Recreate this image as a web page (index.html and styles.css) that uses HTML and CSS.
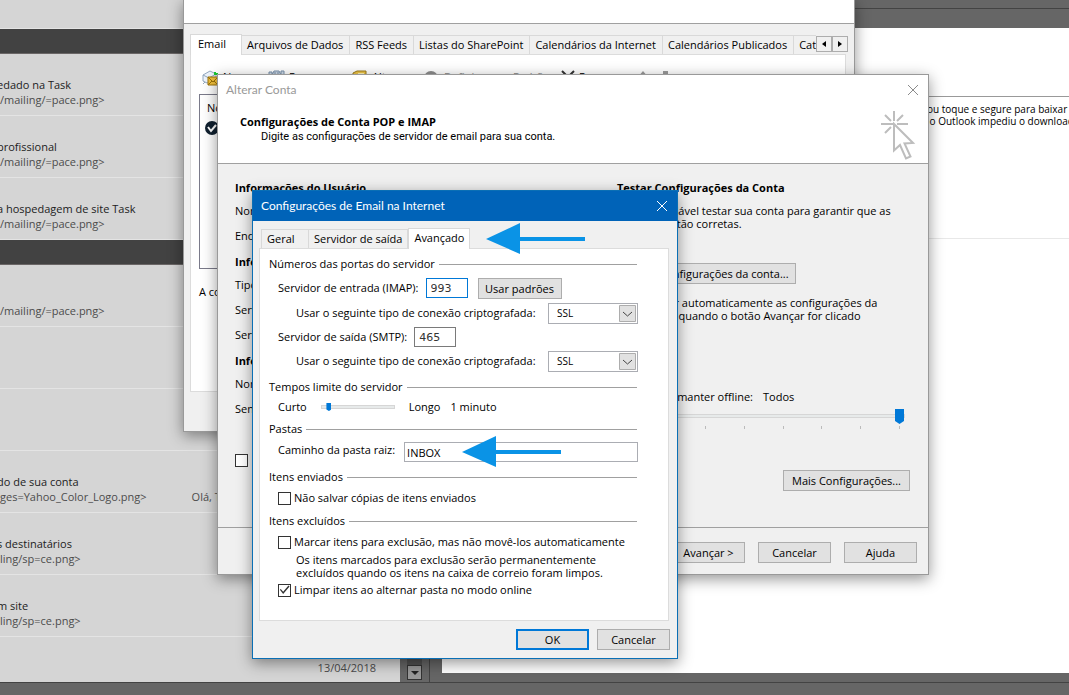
FILE: index.html
```html
<!DOCTYPE html>
<html lang="pt-BR">
<head>
<meta charset="utf-8">
<title>Configurações de Email na Internet</title>
<link rel="stylesheet" href="styles.css">
</head>
<body>
<div class="desktop">
  <main class="workspace">
    <section class="mail-list">
      <div class="list-top"></div>
      <div class="group-bar"></div>
      <article class="mail"><p class="subject">edado na Task</p><p class="preview">/mailing/=pace.png&gt;</p></article>
      <article class="mail"><p class="subject">profissional</p><p class="preview">/mailing/=pace.png&gt;</p></article>
      <article class="mail"><p class="subject">a hospedagem de site Task</p><p class="preview">/mailing/=pace.png&gt;</p></article>
      <div class="group-bar"></div>
      <article class="mail"><p></p><p class="preview">/mailing/=pace.png&gt;</p></article>
      <article class="mail"></article>
      <article class="mail"></article>
      <article class="mail"><p class="subject">do de sua conta</p><p class="preview two"><span>ges=Yahoo_Color_Logo.png&gt;</span><span>Olá, T</span></p></article>
      <article class="mail"><p class="subject">s destinatários</p><p class="preview">ling/sp=ce.png&gt;</p></article>
      <article class="mail"><p class="subject">m site</p><p class="preview">ling/sp=ce.png&gt;</p></article>
      <article class="mail last"><p class="date">13/04/2018</p></article>
    </section>
    <div class="scroll-gutter">
      <div class="scroll-track"></div>
      <button class="scroll-down" aria-label="Rolar para baixo"><svg width="8" height="4" viewBox="0 0 8 4"><path d="M0 0h8L4 4z" fill="#222"/></svg></button>
    </div>
    <section class="reading">
      <div class="ribbon"></div>
      <div class="message">
        <div class="message-head"></div>
        <p class="notice">ou toque e segure para baixar i<br>&nbsp;o Outlook impediu o download a</p>
      </div>
    </section>
  </main>
  <footer class="status"></footer>

  <section class="window accounts">
    <div class="accounts-head"></div>
    <div class="accounts-body">
      <div class="tabs">
        <button class="tab active first">Email</button>
        <button class="tab">Arquivos de Dados</button>
        <button class="tab">RSS Feeds</button>
        <button class="tab">Listas do SharePoint</button>
        <button class="tab">Calendários da Internet</button>
        <button class="tab">Calendários Publicados</button>
        <button class="tab cut">Cat</button>
        <span class="spin">
          <button aria-label="Anterior"><svg width="4" height="6" viewBox="0 0 4 6"><path d="M4 0v6L0 3z"/></svg></button>
          <button aria-label="Próximo"><svg width="4" height="6" viewBox="0 0 4 6"><path d="M0 0v6l4-3z"/></svg></button>
        </span>
      </div>
      <div class="pane">
        <div class="tools">
          <span class="tool t1"><svg width="17" height="18" viewBox="0 0 17 18"><path d="M1 6l7-4 6 3v6l-9 3-4-2z" fill="#eef4fb" stroke="#93a8bf"/><path d="M1 6l6 3 7-4M3 13l-2 2" fill="none" stroke="#93a8bf"/><path d="M13 3v3M12 5h4" stroke="#19c832" stroke-width="2"/><path d="M6 8h10v8H6z" fill="#f3c13c" stroke="#9b7209"/><path d="M6 8l5 5 5-5M6 16l4-4m6 4l-4-4" fill="none" stroke="#9b7209"/></svg>Novo...</span>
          <span class="tool t2"><svg width="17" height="18" viewBox="0 0 17 18"><path d="M1 3h3v3l2-4h5l2 4V2h3v9H1z" fill="#cfdbe8" stroke="#7890aa"/><path d="M7 3v8M10 3v8" stroke="#7890aa"/></svg>Reparar...</span>
          <span class="tool t3"><svg width="17" height="18" viewBox="0 0 17 18"><path d="M2 4l4-2h9v10H2z" fill="#efc546" stroke="#9b7b1c"/><path d="M7 4h6v3H7z" fill="#fff3b5"/></svg>Alterar...</span>
          <span class="tool t4 off"><svg width="17" height="18" viewBox="0 0 17 18"><circle cx="8" cy="9" r="7" fill="#8d8d8d"/></svg>Definir como Padrão</span>
          <span class="tool t5"><svg width="14" height="18" viewBox="0 0 14 18"><path d="M1 2l12 12M13 2L1 14" stroke="#333" stroke-width="2"/></svg>Remover</span>
          <span class="tool t6 off"><svg width="36" height="18" viewBox="0 0 36 18"><path d="M6 2l5 6H8v6H4V8H1zM26 2h5v6h3l-5 6-5-6h2z" fill="#9a9a9a"/></svg></span>
        </div>
        <div class="listbox">
          <span>Nome</span>
          <svg width="14" height="14" viewBox="0 0 14 14"><circle cx="7" cy="7" r="7" fill="#10202f"/><path d="M3 6l3 4 5-6" fill="none" stroke="#fff" stroke-width="2"/></svg>
        </div>
        <p class="hint">A conta</p>
      </div>
    </div>
  </section>

  <section class="window change">
    <header class="change-head">
      <div class="change-title"><span>Alterar Conta</span><button class="close" aria-label="Fechar"><svg width="10" height="10" viewBox="0 0 10 10"><path d="M0 0l10 10M10 0L0 10" stroke="#8b8b8b"/></svg></button></div>
      <div class="change-intro">
        <div>
          <h2>Configurações de Conta POP e IMAP</h2>
          <p>Digite as configurações de servidor de email para sua conta.</p>
        </div>
        <svg width="36" height="52" viewBox="0 0 36 52" fill="none" stroke="#bdbdbd" stroke-width="2"><path d="M14 0v10M14 13H1M17 13h11M5 4l6 6M23 4l-6 6M11 16l-6 6"/><path d="M14 13v26.500l6-5.500 6 13.500 4.500-2-6-13 8.500-.5z"/></svg>
      </div>
    </header>
    <div class="change-body">
      <div class="user-col">
        <h3>Informações do Usuário</h3>
        <p>Nom</p><p>Ende</p>
        <h3>Infor</h3>
        <p>Tipo</p><p>Servi</p><p>Servi</p>
        <h3>Infor</h3>
        <p>Nom</p><p>Senh</p>
        <input type="checkbox" class="check" aria-label="Logon">
      </div>
      <div class="test-col">
        <h3>Testar Configurações da Conta</h3>
        <p class="test-text">É recomendável testar sua conta para garantir que as<br>entradas estão corretas.</p>
        <button class="btn test-btn">Testar Configurações da conta...</button>
        <p class="auto-text">Testar automaticamente as configurações da<br>conta quando o botão Avançar for clicado</p>
        <div class="offline"><label for="off">Email para manter offline:</label><output>Todos</output></div>
        <input id="off" class="range big" type="range" min="0" max="7" value="7">
        <div class="ticks"><i></i><i></i><i></i><i></i><i></i><i></i></div>
        <button class="btn more">Mais Configurações...</button>
      </div>
    </div>
    <footer class="change-foot">
      <button class="btn std next">Avançar &gt;</button>
      <button class="btn std">Cancelar</button>
      <button class="btn std">Ajuda</button>
    </footer>
  </section>

  <section class="window internet">
    <header class="blue-title"><span>Configurações de Email na Internet</span><button class="close" aria-label="Fechar"><svg width="10" height="10" viewBox="0 0 10 10"><path d="M0 0l10 10M10 0L0 10" stroke="#fff"/></svg></button></header>
    <div class="internet-body">
      <div class="tabs inner">
        <button class="tab geral">Geral</button>
        <button class="tab">Servidor de saída</button>
        <button class="tab active">Avançado</button>
      </div>
      <form class="pane form">
        <h4>Números das portas do servidor</h4>
        <div class="row imap"><label for="imap">Servidor de entrada (IMAP):</label><input id="imap" class="port focus" value="993"><button type="button" class="btn defaults">Usar padrões</button></div>
        <div class="row crypt"><label for="c1">Usar o seguinte tipo de conexão criptografada:</label><span class="select"><select id="c1"><option>SSL</option></select><svg width="17" height="17" viewBox="0 0 17 17"><path d="M.5.500h16v16H.5z" fill="#e1e1e1" stroke="#adadad"/><path d="M4 7l4.500 4L13 7" fill="none" stroke="#444"/></svg></span></div>
        <div class="row"><label for="smtp">Servidor de saída (SMTP):</label><input id="smtp" class="port" value="465"></div>
        <div class="row crypt"><label for="c2">Usar o seguinte tipo de conexão criptografada:</label><span class="select"><select id="c2"><option>SSL</option></select><svg width="17" height="17" viewBox="0 0 17 17"><path d="M.5.500h16v16H.5z" fill="#e1e1e1" stroke="#adadad"/><path d="M4 7l4.500 4L13 7" fill="none" stroke="#444"/></svg></span></div>
        <h4 class="timeouts">Tempos limite do servidor</h4>
        <div class="row time"><label for="t">Curto</label><input id="t" class="range" type="range" min="0" max="100" value="7"><span>Longo</span><output>1 minuto</output></div>
        <h4>Pastas</h4>
        <div class="row folder"><label for="root">Caminho da pasta raiz:</label><input id="root" class="path" value="INBOX"></div>
        <h4>Itens enviados</h4>
        <label class="row tick"><input type="checkbox" class="check">Não salvar cópias de itens enviados</label>
        <h4>Itens excluídos</h4>
        <label class="row tick"><input type="checkbox" class="check">Marcar itens para exclusão, mas não movê-los automaticamente</label>
        <p class="explain">Os itens marcados para exclusão serão permanentemente<br>excluídos quando os itens na caixa de correio foram limpos.</p>
        <label class="row tick purge"><input type="checkbox" class="check" checked>Limpar itens ao alternar pasta no modo online</label>
      </form>
      <div class="actions"><button class="btn std ok">OK</button><button class="btn std">Cancelar</button></div>
    </div>
    <svg class="pointer p1" width="100" height="32" viewBox="0 0 100 32"><path d="M0 16L34 0v14h65v4H34v13z" fill="#0a93e6"/></svg>
    <svg class="pointer p2" width="100" height="32" viewBox="0 0 100 32"><path d="M0 16L34 0v14h65v4H34v13z" fill="#0a93e6"/></svg>
  </section>
</div>
</body>
</html>
```

FILE: styles.css
```css
* { box-sizing: border-box; }
body { margin: 0; font: 11px/16px "Open Sans", "Noto Sans", sans-serif; color: #000; }
p, h2, h3, h4 { margin: 0; font-size: inherit; font-weight: inherit; }
button, input, select { font: inherit; color: inherit; margin: 0; padding: 0; border-radius: 0; }
svg { display: block; flex: none; }

.desktop { position: relative; height: 100vh; overflow: hidden; display: flex; flex-direction: column; background: #666; }
.workspace { flex: 1; min-height: 0; display: flex; }
.status { height: 13px; border-top: 1px solid #434343; }

.mail-list { flex: none; width: 400px; background: #d5d5d5; line-height: 15px; overflow: hidden; color: #222; white-space: nowrap; }
.list-top { height: 29px; border-bottom: 1px solid #e4e4e4; }
.group-bar { height: 25px; background: #424242; border-bottom: 1px solid #6a6666; }
.mail { height: 62px; padding-top: 23px; border-bottom: 1px solid #e4e4e4; }
.mail p { height: 15px; }
.subject { margin-left: -3px; }
.mail.last { border: 0; }
.preview { color: #4c4c4c; }
.two { display: flex; gap: 45px; }
.date { text-align: right; padding-right: 24px; color: #4c4c4c; }
.scroll-gutter { flex: none; width: 30px; border-right: 1px solid #434343; padding-bottom: 2px; display: flex; flex-direction: column; align-items: center; }
.scroll-track { flex: 1; width: 15px; background: #505050; }
.scroll-down { width: 15px; height: 15px; background: #999; border: 1px solid #333; display: flex; align-items: center; justify-content: center; }
.reading { flex: 1; min-width: 0; display: flex; flex-direction: column; padding-bottom: 9px; }
.ribbon { height: 28px; background: linear-gradient(#666 8px, #434343 8px, #434343 9px, #666 9px); }
.message { flex: 1; margin-left: 12px; background: #fff; }
.message-head { height: 69px; border-bottom: 1px solid #999; }
.notice { height: 142px; padding: 6px 0 0 485px; border-bottom: 1px solid #e8e8e8; font-size: 10px; line-height: 12px; white-space: nowrap; overflow: hidden; }

.window { position: absolute; background: #f0f0f0; border: 1px solid #999; box-shadow: 0 4px 14px rgba(0,0,0,.42); white-space: nowrap; }
.btn { height: 21px; background: #e1e1e1; border: 1px solid #adadad; text-align: center; line-height: 19px; }
.std { width: 73px; }
.close { border: 0; background: none; }
.check { appearance: none; width: 13px; height: 13px; border: 1px solid #333; background: #fff; flex: none; display: flex; }
.check:checked::before { content: ""; flex: 1; background: #333; clip-path: polygon(8% 48%, 16% 40%, 38% 66%, 86% 10%, 96% 18%, 38% 86%); }
.tabs { display: flex; align-items: flex-end; }
.tab { height: 19px; padding: 0 6px; background: #f0f0f0; border: 1px solid #d9d9d9; border-width: 1px 1px 0 0; }
.tab.active { height: 21px; background: #fff; border-left-width: 1px; margin-bottom: -1px; padding-bottom: 3px; }
.pane { background: #fff; border: 1px solid #dcdcdc; }

.accounts { left: 183px; top: -1px; width: 672px; height: 433px; }
.accounts-head { height: 24px; background: #fff; border-bottom: 1px solid #a0a0a0; }
.accounts-body { padding: 10px 8px 0 6px; }
.accounts .tab { flex: none; padding-left: 5px; }
.accounts .first { width: 52px; padding-left: 7px; text-align: left; }
.accounts .cut { width: 22px; overflow: hidden; text-align: left; border-right: 0; }
.spin { display: flex; align-self: flex-start; margin: 2px 0 0 auto; }
.spin button { width: 16px; height: 16px; background: #f0f0f0; border: 1px solid #adadad; display: flex; align-items: center; justify-content: center; }
.accounts .pane { height: 338px; padding: 14px 8px; }
.tools { display: flex; height: 25px; }
.tool { display: flex; gap: 4px; height: 18px; padding-left: 3px; }
.t1 { width: 66px; }
.t2 { width: 83px; }
.t3 { width: 72px; }
.t4 { width: 138px; }
.t5 { width: 76px; }
.off { color: #888; }
.listbox { height: 175px; border: 1px solid #7a7a8a; padding: 5px 5px; }
.listbox span { display: block; padding-left: 2px; height: 21px; }
.hint { padding-top: 15px; }

.change { left: 217px; top: 74px; width: 712px; }
.change-head { background: #fff; height: 89px; border-bottom: 1px solid #a0a0a0; }
.change-title { display: flex; align-items: center; justify-content: space-between; height: 30px; padding: 0 10px 0 8px; color: #999; font-family: Lato, "Open Sans", sans-serif; font-size: 12px; }
.change-intro { display: flex; justify-content: space-between; padding: 6px 12px 0 22px; line-height: 15px; }
.change-intro > div { padding-top: 3px; }
.change-intro p { padding-left: 21px; font-family: Roboto, "Open Sans", sans-serif; }
h2, h3 { font-weight: 700; }
.change h2, .change h3 { font-weight: 700; }
.change-body { display: flex; height: 364px; padding: 16px 18px 0 17px; border-bottom: 1px solid #a0a0a0; }
.user-col { width: 382px; }
.user-col h3 { height: 24px; line-height: 16px; }
.user-col p { height: 25px; line-height: 14px; }
.user-col .check { margin-top: 27px; }
.test-col { flex: 1; display: flex; flex-direction: column; }
.test-text, .auto-text { line-height: 13px; }
.test-text { padding-top: 8px; }
.test-btn { width: 179px; margin-top: 33px; }
.auto-text { padding: 12px 0 0 30px; }
.offline { display: flex; gap: 10px; padding: 67px 0 0 3px; }
.range { appearance: none; background: none; height: 12px; }
.range::-webkit-slider-runnable-track { height: 4px; background: #e7eaea; border: 1px solid #d6d6d6; }
.range::-webkit-slider-thumb { appearance: none; width: 5px; height: 8px; margin-top: -3px; background: #0078d7; clip-path: polygon(0 0, 100% 0, 100% 80%, 50% 100%, 0 80%); }
.big { width: 288px; margin-top: 5px; }
.big::-webkit-slider-thumb { width: 9px; height: 15px; margin-top: -6px; }
.ticks { display: flex; justify-content: space-between; width: 195px; margin: 4px 0 0 88px; }
.ticks i { width: 1px; height: 3px; background: #bbb; }
.more { width: 127px; align-self: flex-end; margin-top: 41px; }
.change-foot { display: flex; justify-content: flex-end; gap: 13px; padding: 14px 11px 11px; }

.internet { left: 252px; top: 190px; width: 426px; border-color: #0a6fb5; }
.blue-title { height: 30px; background: #0063b8; color: #fff; font-family: Lato, "Open Sans", sans-serif; font-size: 12px; display: flex; align-items: center; justify-content: space-between; padding: 0 10px 0 8px; }
.internet-body { padding: 7px 7px 8px 6px; }
.inner { padding-left: 2px; }
.inner .tab { padding-left: 5px; padding-right: 5px; }
.inner .geral { border-left-width: 1px; width: 48px; text-align: left; }
.form { margin-right: 1px; padding: 7px 31px 22px 9px; }
.form h4 { display: flex; align-items: center; gap: 4px; height: 16px; }
.form h4::after { content: ""; flex: 1; height: 1px; background: #a0a0a0; }
.row { display: flex; align-items: center; height: 20px; margin: 4px 0; padding-left: 9px; }
.imap { margin: 6px 0 5px; }
.form .timeouts { margin-top: 8px; }
.crypt { padding-left: 27px; justify-content: space-between; margin-right: -1px; }
.port { width: 42px; height: 20px; border: 1px solid #7a7a7a; padding-left: 4px; margin-left: 7px; font-family: "DejaVu Sans", sans-serif; color: #333; }
.focus { border-color: #0078d7; }
.defaults { width: 84px; margin-left: 10px; }
.select { position: relative; width: 90px; height: 21px; }
.select select { appearance: none; width: 100%; height: 100%; border: 1px solid #abadb3; background: #fff; padding-left: 8px; font-size: 10px; }
.select svg { position: absolute; right: 2px; top: 2px; pointer-events: none; }
.time { height: 16px; margin-bottom: 6px; }
.time .range { width: 74px; margin: 0 14px; }
.time output { margin-left: 10px; }
.folder { margin: 5px -1px 7px 0; }
.folder label { padding-bottom: 4px; }
.path { flex: 1; min-width: 0; height: 20px; margin-left: 9px; border: 1px solid #abadb3; padding-left: 2px; }
.tick { height: 16px; gap: 3px; margin: 5px 0 7px; }
.explain { padding-left: 27px; line-height: 13px; }
.form .tick:has(+ .explain) { margin-bottom: 3px; }
.purge { margin: 3px 0 0; }
.actions { display: flex; justify-content: flex-end; gap: 8px; padding-top: 8px; }
.ok { border: 2px solid #0078d7; line-height: 17px; }
.pointer { position: absolute; }
.p1 { left: 233px; top: 32px; }
.p2 { left: 209px; top: 245px; }
```
